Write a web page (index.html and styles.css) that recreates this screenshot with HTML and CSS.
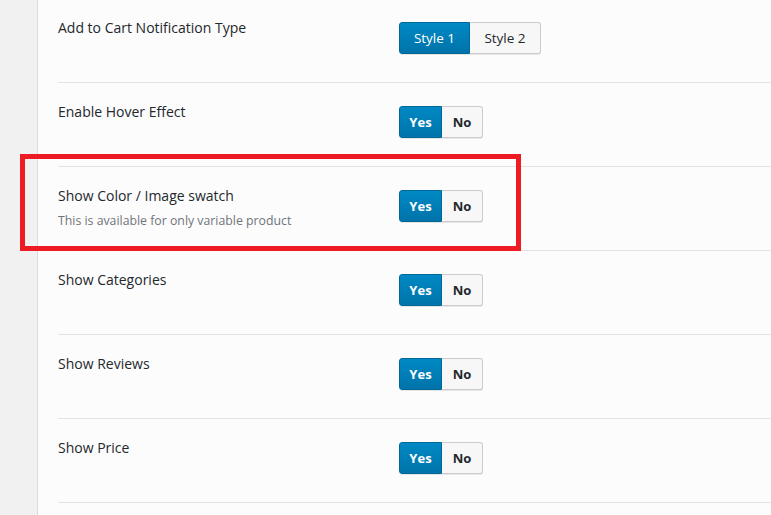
FILE: index.html
```html
<!DOCTYPE html>
<html lang="en">
<head>
    <meta charset="UTF-8">
    <meta name="viewport" content="width=device-width, initial-scale=1.0">
    <title>Shop Settings</title>
    <link rel="stylesheet" href="styles.css">
</head>
<body>
    <div class="layout">
        <!-- Admin menu strip -->
        <div class="sidebar"></div>

        <div class="content">
            <div class="settings">
                <!-- Add to cart notification -->
                <div class="row">
                    <div class="label">
                        <div class="title">Add to Cart Notification Type</div>
                    </div>
                    <div class="control">
                        <div class="btn-group">
                            <button class="btn active">Style 1</button>
                            <button class="btn">Style 2</button>
                        </div>
                    </div>
                </div>

                <div class="row">
                    <div class="label">
                        <div class="title">Enable Hover Effect</div>
                    </div>
                    <div class="control">
                        <div class="btn-group switch">
                            <button class="btn active">Yes</button>
                            <button class="btn">No</button>
                        </div>
                    </div>
                </div>

                <div class="row marked">
                    <div class="highlight"></div>
                    <div class="label">
                        <div class="title">Show Color / Image swatch</div>
                        <div class="desc">This is available for only variable product</div>
                    </div>
                    <div class="control">
                        <div class="btn-group switch">
                            <button class="btn active">Yes</button>
                            <button class="btn">No</button>
                        </div>
                    </div>
                </div>

                <div class="row">
                    <div class="label">
                        <div class="title">Show Categories</div>
                    </div>
                    <div class="control">
                        <div class="btn-group switch">
                            <button class="btn active">Yes</button>
                            <button class="btn">No</button>
                        </div>
                    </div>
                </div>

                <div class="row">
                    <div class="label">
                        <div class="title">Show Reviews</div>
                    </div>
                    <div class="control">
                        <div class="btn-group switch">
                            <button class="btn active">Yes</button>
                            <button class="btn">No</button>
                        </div>
                    </div>
                </div>

                <div class="row">
                    <div class="label">
                        <div class="title">Show Price</div>
                    </div>
                    <div class="control">
                        <div class="btn-group switch">
                            <button class="btn active">Yes</button>
                            <button class="btn">No</button>
                        </div>
                    </div>
                </div>
            </div>
        </div>
    </div>
</body>
</html>
```

FILE: styles.css
```css
html, body {
    margin: 0;
    padding: 0;
    height: 100%;
    overflow: hidden;
}
body {
    font-family: "Open Sans", "Noto Sans", Arial, sans-serif;
    font-size: 14px;
    color: #23282d;
    background-color: #fcfcfc;
}
.layout {
    display: flex;
    min-height: 100%;
}
.sidebar {
    width: 37px;
    flex-shrink: 0;
    background-color: #f1f1f1;
    border-right: 1px solid #dcdcdc;
}
.content {
    flex: 1;
    padding-left: 20px;
}
.settings {
    margin-top: -1px;
}
.row {
    position: relative;
    display: grid;
    grid-template-columns: 341px 1fr;
    height: 84px;
    box-sizing: border-box;
    padding-top: 19px;
    border-bottom: 1px solid #e3e3e3;
}
.title {
    line-height: 20px;
    font-size: 14px;
}
.desc {
    margin-top: 5px;
    line-height: 20px;
    font-size: 12.3px;
    color: #6f747a;
}
.control {
    padding-top: 4px;
}
.btn-group {
    display: inline-flex;
}
.btn {
    height: 32px;
    margin: 0;
    padding: 0;
    white-space: nowrap;
    font-family: inherit;
    font-size: 13.5px;
    color: #23282d;
    background-color: #f7f7f7;
    border: 1px solid #cccccc;
    box-shadow: 0 1px 0 #e6e6e6;
    cursor: pointer;
}
.btn:first-child {
    border-radius: 3px 0 0 3px;
}
.btn:last-child {
    border-left: none;
    border-radius: 0 3px 3px 0;
}
.btn.active {
    color: #ffffff;
    background: linear-gradient(#0089c4, #0073aa);
    border-color: #006799;
}
.btn-group .btn:nth-child(1) {
    width: 71px;
}
.btn-group .btn:nth-child(2) {
    width: 71px;
}
.switch .btn {
    font-size: 13px;
    font-weight: bold;
}
.switch .btn:nth-child(1) {
    width: 43px;
}
.switch .btn:nth-child(2) {
    width: 41px;
}
/* red frame around the swatch option */
.highlight {
    position: absolute;
    top: -13px;
    left: -38px;
    width: 501px;
    height: 97px;
    box-sizing: border-box;
    border: 5px solid #ed1c24;
    pointer-events: none;
}
```
